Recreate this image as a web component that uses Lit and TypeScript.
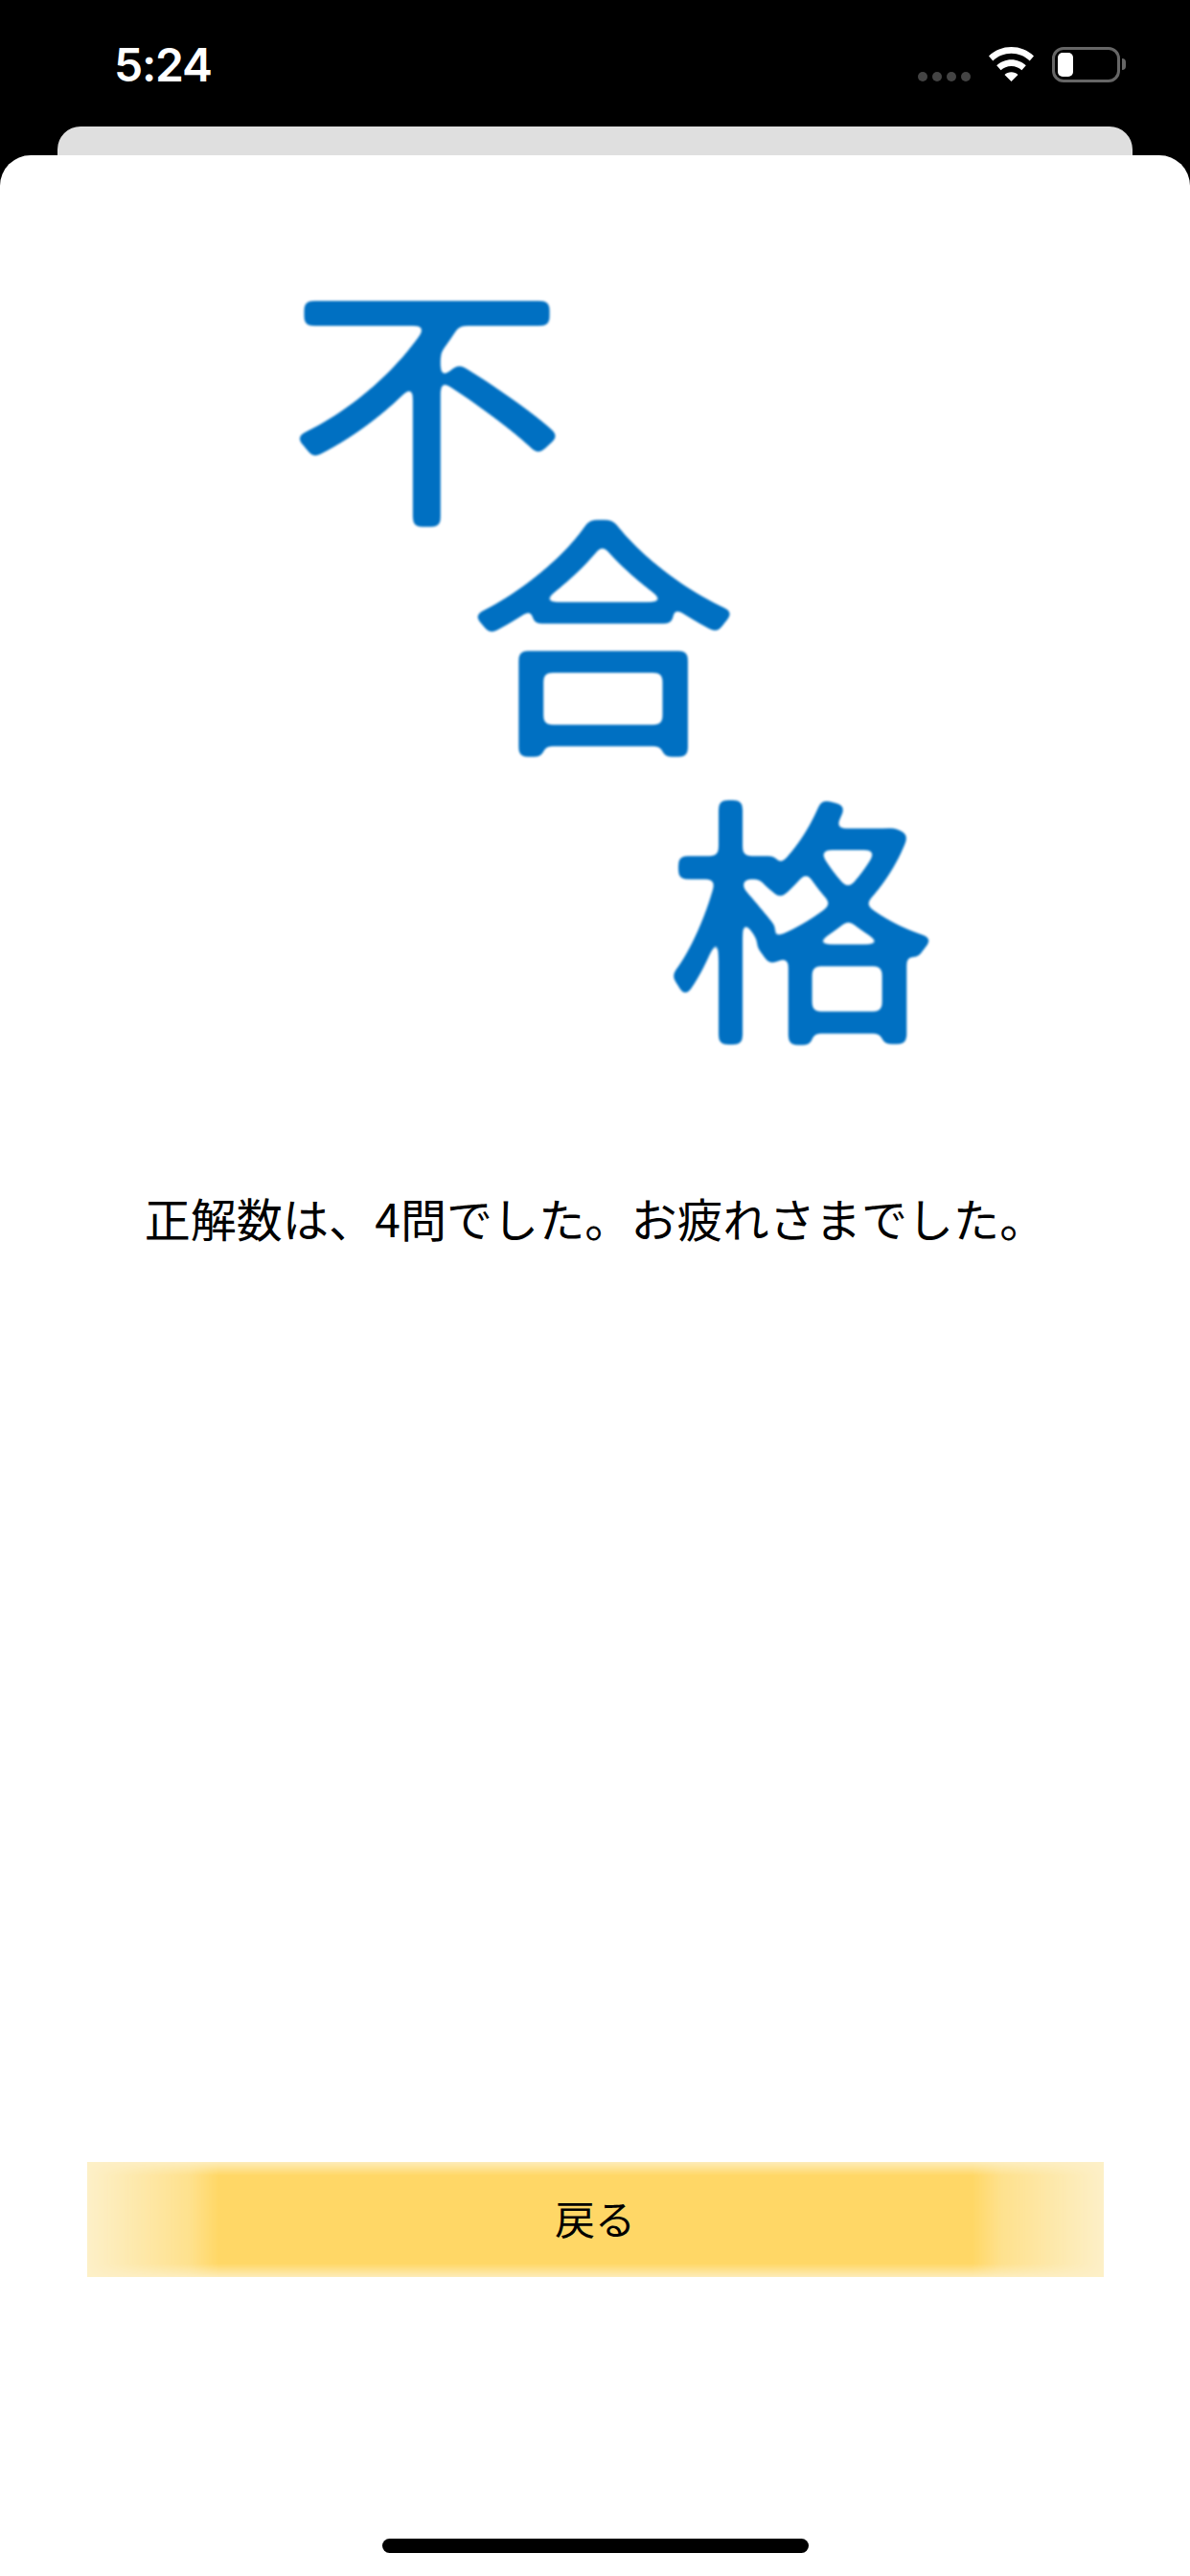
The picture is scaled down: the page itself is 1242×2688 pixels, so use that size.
import { LitElement, html, css, svg } from "lit";
import { customElement } from "lit/decorators.js";

@customElement("app-root")
export class AppRoot extends LitElement {
  static styles = css`
    :host {
      display: block;
      width: 1242px;
      height: 2688px;
      background: #000;
      font-family: "Noto Sans CJK JP", "Liberation Sans", sans-serif;
      overflow: hidden;
    }
    .page { display: flex; flex-direction: column; height: 2688px; }
    .status {
      height: 132px;
      flex: none;
      box-sizing: border-box;
      padding: 0 73px 0 120px;
      display: flex;
      justify-content: space-between;
      align-items: flex-start;
      color: #fff;
    }
    .time {
      font: 600 48px/1 Inter, "Liberation Sans", sans-serif;
      margin-top: 44px;
      margin-left: -1px;
      letter-spacing: -1.2px;
    }
    .icons { display: flex; align-items: flex-start; margin-top: 49px; }
    .dots { display: flex; gap: 5px; margin-top: 26px; margin-right: 19px; }
    .dot { width: 10px; height: 10px; border-radius: 50%; background: #444; }
    .wifi { display: block; width: 47px; height: 36px; margin-right: 19px; }
    .battery {
      box-sizing: border-box;
      width: 71px;
      height: 37px;
      border: 3px solid #666;
      border-radius: 12px;
      padding: 3px;
      position: relative;
    }
    .battery::before {
      content: "";
      display: block;
      width: 16px;
      height: 25px;
      border-radius: 5px;
      background: #fff;
    }
    .battery::after {
      content: "";
      position: absolute;
      left: 70px;
      top: 9px;
      width: 4px;
      height: 12px;
      background: #666;
      border-radius: 0 6px 6px 0;
    }
    .back {
      height: 30px;
      flex: none;
      margin: 0 60px;
      background: #dfdfdf;
      border-radius: 24px 24px 0 0;
    }
    .sheet {
      flex: 1;
      background: #fff;
      border-radius: 32px 32px 0 0;
      display: flex;
      flex-direction: column;
      align-items: center;
      position: relative;
    }
    .logo { display: block; width: 1242px; height: 950px; flex: none; overflow: visible; }
    .logo text {
      font-family: "Noto Sans CJK JP", sans-serif;
      font-size: 272px;
      font-weight: 400;
      fill: #0070c2;
      stroke: #0070c2;
      stroke-width: 5px;
      stroke-linejoin: round;
      stroke-linecap: round;
    }
    .msg {
      margin: 0;
      margin-top: 123px;
      font-size: 48px;
      line-height: 70px;
      font-weight: 400;
      letter-spacing: 0.1px;
      color: #000;
      text-align: center;
    }
    .btn {
      margin-top: auto;
      width: 1061px;
      height: 120px;
      flex: none;
      background: #fdf0c8;
      position: relative;
      display: flex;
      align-items: center;
      justify-content: center;
      font-size: 42px;
      color: #000;
    }
    .btn::before {
      content: "";
      position: absolute;
      inset: 0;
      background: #ffd766;
      -webkit-mask-image:
        linear-gradient(to right, transparent, rgba(0,0,0,.6) 107px, #000 137px, #000 calc(100% - 137px), rgba(0,0,0,.6) calc(100% - 107px), transparent),
        linear-gradient(to bottom, rgba(0,0,0,.15), #000 14px, #000 calc(100% - 14px), rgba(0,0,0,.15));
      mask-image:
        linear-gradient(to right, transparent, rgba(0,0,0,.6) 107px, #000 137px, #000 calc(100% - 137px), rgba(0,0,0,.6) calc(100% - 107px), transparent),
        linear-gradient(to bottom, rgba(0,0,0,.15), #000 14px, #000 calc(100% - 14px), rgba(0,0,0,.15));
      -webkit-mask-composite: source-in;
      mask-composite: intersect;
    }
    .btn span { position: relative; top: -3px; }
    .foot { height: 312px; flex: none; display: flex; align-items: flex-start; justify-content: center; }
    .home { width: 445px; height: 15px; margin-top: 273px; border-radius: 8px; background: #000; }
  `;

  render() {
    return html`
      <div class="page">
        <div class="status">
          <div class="time">5:24</div>
          <div class="icons">
            <div class="dots">
              <div class="dot"></div><div class="dot"></div><div class="dot"></div><div class="dot"></div>
            </div>
            <svg class="wifi" viewBox="0 0 47 36">
              <path fill="#fff" d="M23.5 0C14.5 0 6.3 3.4 0 9.4l4.3 5C9.4 9.500 16.100 6.700 23.500 6.700s14.100 2.800 19.200 7.700l4.300-5C40.700 3.400 32.500 0 23.500 0Z"/>
              <path fill="#fff" d="M23.500 13.200c-5.900 0-11.300 2.300-15.300 6.100l4.400 5c2.800-2.700 6.600-4.300 10.900-4.300s8.100 1.600 10.900 4.300l4.400-5c-4-3.800-9.400-6.100-15.300-6.100Z"/>
              <path fill="#fff" d="M23.500 26.200c-2.700 0-5.200 1-7 2.700l7 7.100 7-7.100c-1.800-1.700-4.300-2.700-7-2.700Z"/>
            </svg>
            <div class="battery"></div>
          </div>
        </div>
        <div class="back"></div>
        <div class="sheet">
          <svg class="logo" viewBox="0 0 1242 950">
            <defs>
              <filter id="soft" filterUnits="userSpaceOnUse" x="0" y="0" width="1242" height="950">
                <feGaussianBlur in="SourceAlpha" stdDeviation="4"></feGaussianBlur>
                <feComponentTransfer result="round">
                  <feFuncA type="linear" slope="10" intercept="-4.5"></feFuncA>
                </feComponentTransfer>
                <feFlood flood-color="#0070c2"></feFlood>
                <feComposite in2="round" operator="in"></feComposite>
                <feGaussianBlur stdDeviation="1"></feGaussianBlur>
              </filter>
            </defs>
            <g filter="url(#soft)">
              ${svg`<text transform="translate(300 364) scale(1.07 1)">不</text>
              <text transform="translate(489 604) scale(1.03 0.97)">合</text>
              <text transform="translate(696 904) scale(1.03 1)">格</text>`}
            </g>
          </svg>
          <p class="msg">正解数は、4問でした。お疲れさまでした。</p>
          <div class="btn"><span>戻る</span></div>
          <div class="foot"><div class="home"></div></div>
        </div>
      </div>
    `;
  }
}
